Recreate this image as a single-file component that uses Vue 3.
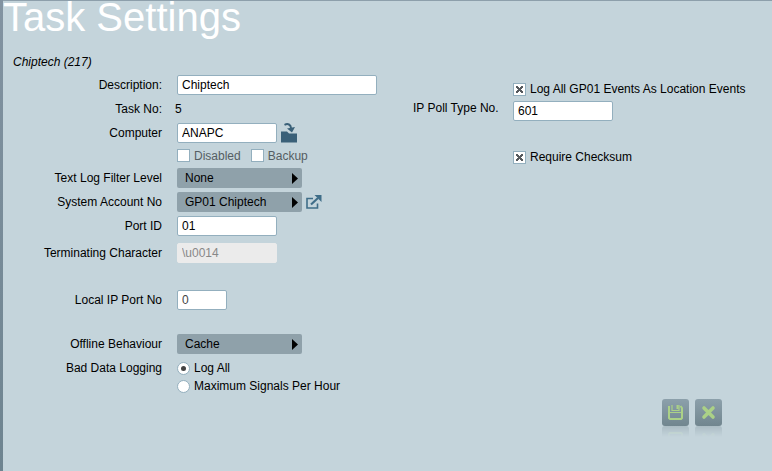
<script setup>
import { reactive } from 'vue'

const form = reactive({
  description: 'Chiptech',
  computer: 'ANAPC',
  disabled: false,
  backup: false,
  filterLevel: 'None',
  account: 'GP01 Chiptech',
  portId: '01',
  terminator: '\\u0014',
  localPort: '0',
  offline: 'Cache',
  badData: 'all',
  locationEvents: true,
  pollType: '601',
  checksum: true,
})
</script>

<template>
  <main class="page">
    <h1>Task Settings</h1>
    <p class="subtitle">Chiptech (217)</p>
    <form @submit.prevent>
      <div class="columns">
        <section class="general">
          <div class="row">
            <label class="name" for="description">Description:</label>
            <input id="description" v-model="form.description" class="text wide" type="text" />
          </div>
          <div class="row">
            <span class="name">Task No:</span>
            <span class="value">5</span>
          </div>
          <div class="row">
            <label class="name" for="computer">Computer</label>
            <input id="computer" v-model="form.computer" class="text" type="text" />
            <button class="icon" type="button" aria-label="Browse">
              <svg width="17" height="20" viewBox="0 0 17 20">
                <path d="M0 8.500h6l2 2h8v9H0z" fill="#3a6078" />
                <path d="M3.500 1.800C7 .200 9.800 1.500 10 5" fill="none" stroke="#3a6078" stroke-width="2" />
                <path d="M6 5.500l8-1.500-3 5.500z" fill="#3a6078" />
              </svg>
            </button>
          </div>
          <div class="row flags">
            <span class="name"></span>
            <label class="option"><input v-model="form.disabled" type="checkbox" />Disabled</label>
            <label class="option"><input v-model="form.backup" type="checkbox" />Backup</label>
          </div>
          <div class="row">
            <label class="name" for="filter">Text Log Filter Level</label>
            <span class="picker">
              <select id="filter" v-model="form.filterLevel"><option>None</option></select>
              <svg width="6" height="11" viewBox="0 0 6 11"><path d="M0 0l6 5.500L0 11z" /></svg>
            </span>
          </div>
          <div class="row">
            <label class="name" for="account">System Account No</label>
            <span class="picker">
              <select id="account" v-model="form.account"><option>GP01 Chiptech</option></select>
              <svg width="6" height="11" viewBox="0 0 6 11"><path d="M0 0l6 5.500L0 11z" /></svg>
            </span>
            <button class="icon" type="button" aria-label="Open account">
              <svg width="16" height="14" viewBox="0 0 16 14">
                <path d="M7 3.500H1v9.500h10.500V8.500" fill="none" stroke="#3f6d88" stroke-width="1.600" />
                <path d="M5 9.500L12 3" stroke="#3f6d88" stroke-width="2.200" />
                <path d="M8.500 0h7V7l-2.300-2.300-2.400-2.400z" fill="#3f6d88" />
              </svg>
            </button>
          </div>
          <div class="row">
            <label class="name" for="port">Port ID</label>
            <input id="port" v-model="form.portId" class="text" type="text" />
          </div>
          <div class="row terminator">
            <label class="name" for="terminator">Terminating Character</label>
            <input id="terminator" v-model="form.terminator" class="text" type="text" disabled />
          </div>
          <div class="row">
            <label class="name" for="local">Local IP Port No</label>
            <input id="local" v-model="form.localPort" class="text short" type="text" />
          </div>
          <div class="row spaced">
            <label class="name" for="offline">Offline Behaviour</label>
            <span class="picker">
              <select id="offline" v-model="form.offline"><option>Cache</option></select>
              <svg width="6" height="11" viewBox="0 0 6 11"><path d="M0 0l6 5.500L0 11z" /></svg>
            </span>
          </div>
          <div class="row choices" role="radiogroup" aria-labelledby="bad-data">
            <span id="bad-data" class="name">Bad Data Logging</span>
            <div>
              <label class="option"><input v-model="form.badData" type="radio" name="bad" value="all" />Log All</label>
              <label class="option"><input v-model="form.badData" type="radio" name="bad" value="max" />Maximum Signals Per Hour</label>
            </div>
          </div>
        </section>

        <section class="protocol">
          <label class="option"><input v-model="form.locationEvents" type="checkbox" />Log All GP01 Events As Location Events</label>
          <label class="poll" for="poll">IP Poll Type No.</label>
          <input id="poll" v-model="form.pollType" class="text" type="text" />
          <label class="option checksum"><input v-model="form.checksum" type="checkbox" />Require Checksum</label>
        </section>
      </div>

      <footer>
        <button class="action" type="submit" aria-label="Save">
          <svg width="15" height="15" viewBox="0 0 15 15">
            <path d="M1 1v12l1 1h11l1-1V3l-1.500-2" fill="none" stroke="#abd187" stroke-width="2" />
            <path d="M1 7.500h13M4 0v5.500h7V0" fill="none" stroke="#abd187" stroke-width="1.200" />
            <path d="M8.500 0h2v4h-2z" fill="#abd187" />
          </svg>
        </button>
        <button class="action" type="button" aria-label="Cancel">
          <svg width="15" height="15" viewBox="0 0 15 15">
            <path d="M3 3l9 9M12 3l-9 9" stroke="#abd187" stroke-width="3.600" stroke-linecap="round" />
          </svg>
        </button>
      </footer>
    </form>
  </main>
</template>

<style>
body {
  background: #c4d4db;
}
</style>

<style scoped>
.page {
  box-sizing: border-box;
  min-height: 100vh;
  padding: 1px 0 15px 3px;
  background:
    linear-gradient(#8293a1, #6e8490) left / 3px 100% no-repeat,
    linear-gradient(#8d9fab, #8d9fab) top / 100% 1px no-repeat,
    #c4d4db;
  color: #000;
  font: 12px/16px "Liberation Sans", Arial, sans-serif;
}
h1 {
  margin: 0;
  color: #fff;
  font-size: 40px;
  font-weight: 400;
  line-height: 32px;
}
.subtitle {
  margin: 21px 0 5px 10px;
  font-style: italic;
}
.columns {
  display: flex;
  align-items: flex-start;
}
.general {
  flex: none;
  width: 410px;
}
.row {
  display: flex;
  align-items: center;
  min-height: 20px;
  margin-bottom: 4px;
}
.name {
  flex: none;
  width: 159px;
  margin-right: 15px;
  text-align: right;
}
.value {
  margin-left: -2px;
}
input,
select,
button {
  margin: 0;
  font: inherit;
  color: inherit;
}
.text {
  box-sizing: border-box;
  width: 100px;
  height: 20px;
  padding: 0 4px;
  border: 1px solid #93afbe;
  border-radius: 2px;
  background: #fff;
}
.wide {
  width: 200px;
}
.short {
  width: 50px;
  color: #444;
}
.text:disabled {
  border-color: #ebebeb;
  background: #ebebeb;
  color: #888;
}
.flags {
  min-height: 17px;
  gap: 10px;
  color: #555e63;
}
.flags .name {
  margin-right: 5px;
}
.row.terminator {
  margin-top: 7px;
  margin-bottom: 27px;
}
.row.spaced {
  margin-top: 24px;
}
.option {
  display: flex;
  align-items: center;
  gap: 4px;
}
.option input {
  appearance: none;
  display: grid;
  place-items: center;
  box-sizing: border-box;
  width: 13px;
  height: 13px;
  border: 1px solid #93afbe;
  background: #fff;
}
.option input[type="radio"] {
  border-radius: 50%;
}
.option input[type="radio"]:checked::before {
  content: "";
  width: 5px;
  height: 5px;
  border-radius: 50%;
  background: #444;
}
.option input[type="checkbox"]:checked::before {
  content: "";
  width: 7px;
  height: 7px;
  background:
    linear-gradient(45deg, transparent 39%, #55595d 39% 61%, transparent 61%),
    linear-gradient(-45deg, transparent 39%, #55595d 39% 61%, transparent 61%);
}
.choices {
  align-items: flex-start;
  margin-bottom: 0;
  padding-top: 2px;
}
.choices .option {
  height: 16px;
  margin-bottom: 2px;
}
.picker {
  display: grid;
  align-items: center;
  width: 125px;
}
.picker > * {
  grid-area: 1 / 1;
}
.picker svg {
  justify-self: end;
  margin-right: 4px;
  pointer-events: none;
}
select {
  appearance: none;
  width: 100%;
  height: 20px;
  padding: 0 8px;
  border: 0;
  border-radius: 2px;
  background: #8fa1aa;
}
.icon {
  display: flex;
  margin-left: 4px;
  padding: 0;
  border: 0;
  background: none;
}
.protocol {
  display: grid;
  grid-template-columns: 85px auto;
  column-gap: 15px;
  padding-top: 6px;
}
.protocol .option {
  grid-column: 2;
}
.poll {
  padding-top: 3px;
  white-space: nowrap;
}
.protocol .text {
  margin-top: 4px;
}
.protocol .checksum {
  margin-top: 28px;
}
footer {
  display: flex;
  justify-content: flex-end;
  gap: 6px;
  padding: 3px 50px 0 0;
}
.action {
  display: grid;
  place-items: center;
  width: 27px;
  height: 27px;
  padding: 0;
  border: 0;
  border-radius: 3px;
  background: linear-gradient(#8ca0ab, #71868f);
  -webkit-box-reflect: below 0 linear-gradient(transparent 60%, rgba(0, 0, 0, 0.3));
}
</style>
